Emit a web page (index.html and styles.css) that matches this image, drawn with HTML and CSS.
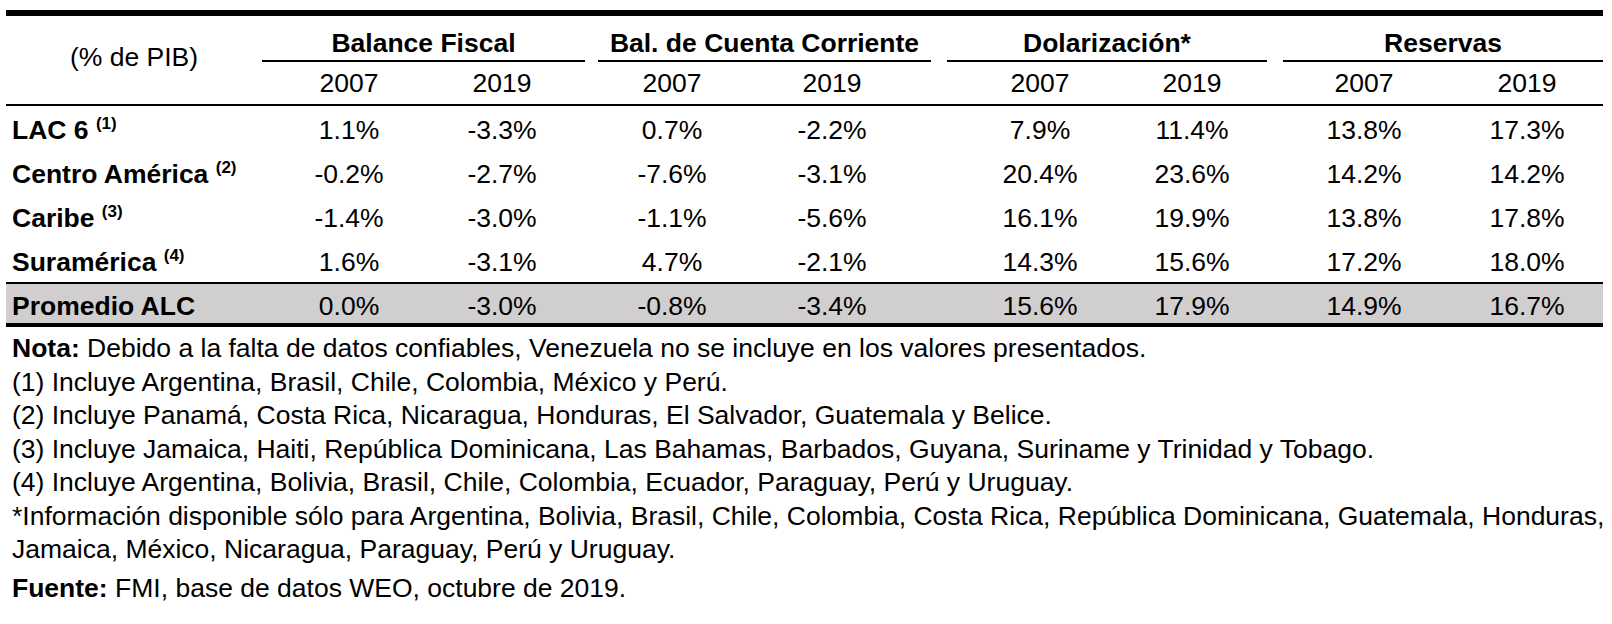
FILE: index.html
```html
<!DOCTYPE html>
<html lang="es">
<head>
<meta charset="utf-8">
<title>Indicadores macroeconómicos ALC</title>
<link rel="stylesheet" href="styles.css">
</head>
<body>
<div class="table">
  <div class="thead">
    <div class="corner">(% de PIB)</div>
    <div class="groups">
      <div class="group g-bf"><div class="gtitle">Balance Fiscal</div></div>
      <div class="group g-bcc"><div class="gtitle">Bal. de Cuenta Corriente</div></div>
      <div class="group g-dol"><div class="gtitle">Dolarización*</div></div>
      <div class="group g-res"><div class="gtitle">Reservas</div></div>
    </div>
    <div class="years">
      <div class="c1">2007</div><div class="c2">2019</div>
      <div class="c3">2007</div><div class="c4">2019</div>
      <div class="c5">2007</div><div class="c6">2019</div>
      <div class="c7">2007</div><div class="c8">2019</div>
    </div>
  </div>

  <div class="row">
    <div class="label">LAC 6 <sup>(1)</sup></div>
    <div class="c1">1.1%</div><div class="c2">-3.3%</div>
    <div class="c3">0.7%</div><div class="c4">-2.2%</div>
    <div class="c5">7.9%</div><div class="c6">11.4%</div>
    <div class="c7">13.8%</div><div class="c8">17.3%</div>
  </div>
  <div class="row">
    <div class="label">Centro América <sup>(2)</sup></div>
    <div class="c1">-0.2%</div><div class="c2">-2.7%</div>
    <div class="c3">-7.6%</div><div class="c4">-3.1%</div>
    <div class="c5">20.4%</div><div class="c6">23.6%</div>
    <div class="c7">14.2%</div><div class="c8">14.2%</div>
  </div>
  <div class="row">
    <div class="label">Caribe <sup>(3)</sup></div>
    <div class="c1">-1.4%</div><div class="c2">-3.0%</div>
    <div class="c3">-1.1%</div><div class="c4">-5.6%</div>
    <div class="c5">16.1%</div><div class="c6">19.9%</div>
    <div class="c7">13.8%</div><div class="c8">17.8%</div>
  </div>
  <div class="row">
    <div class="label">Suramérica <sup>(4)</sup></div>
    <div class="c1">1.6%</div><div class="c2">-3.1%</div>
    <div class="c3">4.7%</div><div class="c4">-2.1%</div>
    <div class="c5">14.3%</div><div class="c6">15.6%</div>
    <div class="c7">17.2%</div><div class="c8">18.0%</div>
  </div>
  <div class="row total">
    <div class="label">Promedio ALC</div>
    <div class="c1">0.0%</div><div class="c2">-3.0%</div>
    <div class="c3">-0.8%</div><div class="c4">-3.4%</div>
    <div class="c5">15.6%</div><div class="c6">17.9%</div>
    <div class="c7">14.9%</div><div class="c8">16.7%</div>
  </div>
</div>

<div class="notes">
  <p><b>Nota:</b> Debido a la falta de datos confiables, Venezuela no se incluye en los valores presentados.</p>
  <p>(1) Incluye Argentina, Brasil, Chile, Colombia, México y Perú.</p>
  <p>(2) Incluye Panamá, Costa Rica, Nicaragua, Honduras, El Salvador, Guatemala y Belice.</p>
  <p>(3) Incluye Jamaica, Haiti, República Dominicana, Las Bahamas, Barbados, Guyana, Suriname y Trinidad y Tobago.</p>
  <p>(4) Incluye Argentina, Bolivia, Brasil, Chile, Colombia, Ecuador, Paraguay, Perú y Uruguay.</p>
  <p>*Información disponible sólo para Argentina, Bolivia, Brasil, Chile, Colombia, Costa Rica, República Dominicana, Guatemala, Honduras,<br>Jamaica, México, Nicaragua, Paraguay, Perú y Uruguay.</p>
  <p class="source"><b>Fuente:</b> FMI, base de datos WEO, octubre de 2019.</p>
</div>
</body>
</html>
```

FILE: styles.css
```css
:root {
  --data: 12px 150px 3px 150px 20px 150px 10px 150px 58px 150px 2px 150px 22px 150px 13px 150px;
}

html, body {
  background: #fff;
}

body {
  margin: 0;
  padding: 10px 0 0 6px;
  font-family: "Liberation Sans", Arial, sans-serif;
  font-size: 26.5px;
  color: #000;
}

.table {
  width: 1597px;
  border-top: 6px solid #000;
}

.thead {
  display: grid;
  grid-template-columns: 256px 1341px;
  grid-template-rows: 46px 42px;
  border-bottom: 2px solid #000;
}

.corner {
  grid-column: 1;
  grid-row: 1 / 3;
  display: flex;
  align-items: center;
  justify-content: center;
  padding-bottom: 6px;
}

.groups {
  grid-column: 2;
  grid-row: 1;
  display: grid;
  grid-template-columns: 330px 347px 336px 328px;
}

.g-bf  { padding: 0 7px 0 0; }
.g-bcc { padding: 0 8px 0 6px; }
.g-dol { padding: 0 8px 0 8px; }
.g-res { padding: 0 0 0 8px; }

.gtitle {
  font-weight: bold;
  text-align: center;
  padding-top: 10px;
  line-height: 34px;
  border-bottom: 2px solid #000;
}

.years {
  grid-column: 2;
  grid-row: 2;
  display: grid;
  grid-template-columns: 0px var(--data);
  line-height: 42px;
  text-align: center;
}

.row {
  display: grid;
  grid-template-columns: 256px var(--data);
  height: 44px;
  padding-top: 5px;
  box-sizing: border-box;
  line-height: 39px;
  text-align: center;
}

.row.total {
  height: 45px;
  padding-top: 3px;
  line-height: 38px;
  background: #d0cecf;
  border-top: 2px solid #000;
  border-bottom: 4px solid #000;
}

.label {
  grid-column: 1;
  text-align: left;
  padding-left: 6px;
  font-weight: bold;
  white-space: nowrap;
}

.label sup {
  font-size: 17px;
  line-height: 0;
  vertical-align: 10px;
}

.c1 { grid-column: 3; }
.c2 { grid-column: 5; }
.c3 { grid-column: 7; }
.c4 { grid-column: 9; }
.c5 { grid-column: 11; }
.c6 { grid-column: 13; }
.c7 { grid-column: 15; }
.c8 { grid-column: 17; }

.notes {
  padding: 5px 0 0 6px;
  line-height: 33.5px;
  white-space: nowrap;
}

.notes p {
  margin: 0;
}

.notes .source {
  margin-top: 5px;
}
```
